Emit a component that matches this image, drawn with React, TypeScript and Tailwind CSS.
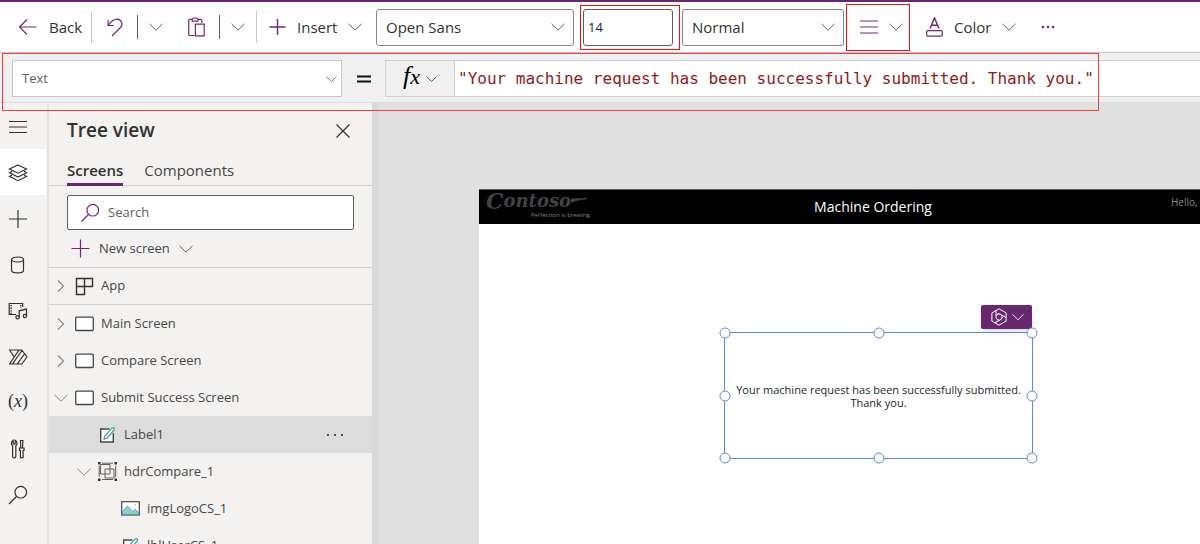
import type { ReactNode } from 'react';

const PURPLE = '#742774';

function Chevron({ className = 'w-3.5 text-[#605e5c]' }: { className?: string }) {
  return (
    <svg className={`h-2 shrink-0 ${className}`} viewBox="0 0 14 8" fill="none" stroke="currentColor">
      <path d="M.5 .8 7 7.2 13.5 .8" />
    </svg>
  );
}

function Svg({ w, h, children, color = '#323130' }: { w: number; h: number; children: ReactNode; color?: string }) {
  return (
    <svg width={w} height={h} viewBox={`0 0 ${w} ${h}`} fill="none" stroke={color} strokeWidth="1.2" className="shrink-0">
      {children}
    </svg>
  );
}

function Separator({ dark = false }: { dark?: boolean }) {
  return <div className={dark ? 'h-6 w-px shrink-0 bg-[#605e5c]' : 'h-8 w-px shrink-0 bg-[#c8c6c4]'} />;
}

function Dropdown({ label, value, className, chevron }: { label: string; value: string; className: string; chevron: string }) {
  return (
    <div className={`relative shrink-0 ${className}`}>
      <select aria-label={label} defaultValue={value} className="h-full w-full appearance-none bg-transparent px-[9px] outline-none">
        <option>{value}</option>
      </select>
      <span className={`pointer-events-none absolute inset-y-0 flex items-center ${chevron}`}>
        <Chevron className="w-full text-[#605e5c]" />
      </span>
    </div>
  );
}

function Toolbar() {
  return (
    <div className="relative flex h-[53px] items-center border-t-2 border-b border-t-[#68286f] border-b-[#c8c6c4] bg-white text-[15px] text-[#323130]">
      <button className="flex h-8 w-[91px] shrink-0 items-center gap-[11px] pl-[18px]">
        <Svg w={20} h={18} color={PURPLE}>
          <path d="M18.5 9H1.5M9 1.5 1.5 9 9 16.5" />
        </Svg>
        Back
      </button>
      <Separator />
      <button aria-label="Undo" className="flex w-[45px] shrink-0 justify-center">
        <Svg w={16} h={19} color={PURPLE}>
          <path d="M1 2v5.500h6M1.200 7.300C4.500 3 6.500 1.200 9.800 1.200c4.500 0 6.800 4.900 3.700 8.300L5 18" />
        </Svg>
      </button>
      <Separator dark />
      <button aria-label="Undo options" className="flex h-8 w-9 shrink-0 items-center justify-center"><Chevron /></button>
      <button aria-label="Paste" className="flex w-[45px] shrink-0 justify-center">
        <Svg w={17} h={20} color={PURPLE}>
          <path d="M6.500 18.500H1.800Q.7 18.500.7 17.400V3.400Q.7 2.300 1.800 2.300H4M10 2.300h2.700q1.100 0 1.100 1.100V6M4.200 4.200V2.200L5.500 1h3.200L10 2.200v2zM7.400 7.200h8.800v11.600H7.400z" />
        </Svg>
      </button>
      <Separator dark />
      <button aria-label="Paste options" className="flex h-8 w-9 shrink-0 items-center justify-center"><Chevron /></button>
      <Separator />
      <button className="flex h-8 w-[119px] shrink-0 items-center gap-[11px] pl-3">
        <Svg w={17} h={18} color={PURPLE}>
          <path d="M8.500 1v16M.5 9h16" strokeWidth="1.400" />
        </Svg>
        Insert
        <Chevron />
      </button>
      <Dropdown label="Font" value="Open Sans" className="h-[37px] w-[198px] rounded-[3px] border border-[#8a8886]" chevron="right-2 w-3.5" />
      <div className="relative ml-[9px] h-[37px] w-[90px] shrink-0">
        <input aria-label="Font size" defaultValue="14" className="h-full w-full rounded-[3px] border border-[#605e5c] px-1 text-[13px] text-[#1b1a3c] outline-none" />
        <div className="pointer-events-none absolute -inset-x-[3px] -inset-y-1 -right-[7px] border border-[#f40f0f]" />
      </div>
      <Dropdown label="Font weight" value="Normal" className="ml-[9px] h-[37px] w-[162px] rounded-[3px] border border-[#8a8886]" chevron="right-2 w-3.5" />
      <button aria-label="Text alignment" className="ml-0.5 flex h-[47px] w-16 shrink-0 items-center gap-[11px] border border-[#f40f0f] pl-[13px]">
        <Svg w={18} h={14} color={PURPLE}>
          <path d="M0 1h18M0 7h18M0 13h18" />
        </Svg>
        <Chevron />
      </button>
      <button className="flex h-8 w-[122px] shrink-0 items-center gap-[11px] pl-4">
        <Svg w={17} h={20} color={PURPLE}>
          <path d="M4 11.500 8.500 1 13 11.500M5.400 8.200h6.200" strokeWidth="1.500" />
          <rect x=".7" y="13.700" width="15.600" height="5.400" rx="1" />
        </Svg>
        Color
        <Chevron />
      </button>
      <button aria-label="More" className="flex h-8 w-8 shrink-0 items-center justify-center">
        <Svg w={14} h={4}>
          <g fill={PURPLE} stroke="none"><circle cx="2" cy="2" r="1.300" /><circle cx="7" cy="2" r="1.300" /><circle cx="12" cy="2" r="1.300" /></g>
        </Svg>
      </button>
    </div>
  );
}

function FormulaBar() {
  return (
    <div className="relative flex h-[50px] items-center border-b border-[#dcdcdc] bg-[#f0f0f0] pt-0.5 pl-3">
      <Dropdown label="Property" value="Text" className="h-[37px] w-[330px] border border-[#c8c6c4] bg-white text-[13px] text-[#605e5c]" chevron="right-1 w-[11px]" />
      <div className="flex w-[43px] shrink-0 justify-center">
        <Svg w={14} h={8} color="#111111"><path d="M0 1.500h14M0 6.500h14" strokeWidth="2" /></Svg>
      </div>
      <button aria-label="Formula options" className="flex h-[37px] w-[70px] shrink-0 items-center justify-center gap-1.5 border border-[#d2d0ce] text-black">
        <span className="flex items-baseline pb-1 font-['Liberation_Serif',serif] text-[26px] leading-7 italic">
          <span>f</span>
          <span className="text-[22px]">x</span>
        </span>
        <Chevron className="w-[11px] text-[#323130]" />
      </button>
      <input
        aria-label="Formula"
        defaultValue={'"Your machine request has been successfully submitted. Thank you."'}
        className="h-[37px] min-w-0 flex-1 border-y border-[#d2d0ce] bg-white px-[3px] font-['DejaVu_Sans_Mono',monospace] text-base text-[#8f1a1a] outline-none"
      />
      <div className="pointer-events-none absolute top-0 left-0.5 z-10 h-[58px] w-[1097px] border border-[#f53b3b]" />
    </div>
  );
}

const railItems: { name: string; icon: ReactNode }[] = [
  { name: 'Menu', icon: <Svg w={20} h={20}><path d="M1 4.500h18M1 10h18M1 15.500h18" /></Svg> },
  { name: 'Tree view', icon: <Svg w={20} h={20}><path d="m10 2 8.500 4L10 10.200 1.500 6zM4 8.200 1.500 9.800 10 14l8.500-4.200L16 8.200M4 12l-2.500 1.500L10 17.700l8.500-4.200L16 12" /></Svg> },
  { name: 'Insert', icon: <Svg w={20} h={20}><path d="M10 1v18M1 10h18" /></Svg> },
  { name: 'Data', icon: <Svg w={20} h={20}><ellipse cx="9.500" cy="4.500" rx="6" ry="2.500" /><path d="M3.500 4.500v11c0 3.200 12 3.200 12 0v-11" /></Svg> },
  {
    name: 'Media',
    icon: (
      <Svg w={20} h={20}>
        <path d="M8 13.500H1.200v-11h13.500V6" />
        <path d="M3.200 4v9M12.700 4v3" strokeDasharray="1.300 1.300" strokeWidth="1.500" />
        <path d="M11.200 16.200V9.800l7.300-1.700v6.800" />
        <circle cx="9.600" cy="16.300" r="1.700" /><circle cx="16.900" cy="15" r="1.700" />
      </Svg>
    ),
  },
  { name: 'Power Automate', icon: <Svg w={20} h={20}><path d="M1.500 3h12.300l5.200 7-5.200 7H1.500l4.700-7zM11 3.200 6.200 10M14 3.500 4.500 16.800M16.500 7 9.300 16.800" strokeLinejoin="round" /></Svg> },
  { name: 'Variables', icon: <span className="pb-1 font-['Liberation_Serif',serif] text-lg leading-5 text-[#323130]">(<i>x</i>)</span> },
  {
    name: 'Advanced tools',
    icon: (
      <Svg w={20} h={20}>
        <path d="M5.200 1.200v3.500l1 .6 1-.6V1.200c2.200 1.200 2.200 4.300.6 5.500v10.800c0 1.800-3.200 1.800-3.200 0V6.700C3 5.500 3 2.400 5.200 1.200zM12.500 1.500h2.400L14.500 9h-1.600zM11.500 9h4.500v2.500h-.9v7.200h-2.700v-7.200h-.9z" />
      </Svg>
    ),
  },
  { name: 'Search', icon: <Svg w={20} h={20}><circle cx="12.800" cy="7.200" r="5.800" /><path d="m8.500 11.500-7.500 7.500" /></Svg> },
];

function Rail() {
  return (
    <nav className="w-[49px] shrink-0 border-r-2 border-[#e3e1e0] bg-[#f3f2f1]">
      {railItems.map((item) => (
        <button
          key={item.name}
          aria-label={item.name}
          className={`flex h-[46px] w-[46px] items-center justify-center pt-0.5 pr-2.5 ${item.name === 'Tree view' ? 'bg-white' : ''}`}
        >
          {item.icon}
        </button>
      ))}
    </nav>
  );
}

function Expander({ open = false }: { open?: boolean }) {
  return (
    <span className="flex w-3.5 shrink-0 justify-center">
      {open ? (
        <Chevron className="w-3.5 text-[#8a8886]" />
      ) : (
        <Svg w={8} h={14} color="#8a8886"><path d="M1 1.500 6.500 7 1 12.500" /></Svg>
      )}
    </span>
  );
}

const ScreenIcon = () => <Svg w={19} h={16}><rect x=".7" y="1.200" width="17.600" height="13.300" rx="1" fill="#fff" stroke="#484644" strokeWidth="1.300" /></Svg>;

const LabelIcon = () => (
  <Svg w={17} h={18} color="#484644">
    <path d="M10.500 3H1.700v13h12.600V7" strokeWidth="1.400" fill="#fff" />
    <path d="M5 13.200 5.800 10 13 2.200q1.300-1 2.100-.1.800.9-.1 2.100L8 12.200z" fill="#fff" stroke="#3f9a9a" />
  </Svg>
);

const GroupIcon = () => (
  <Svg w={19} h={19} color="#605e5c">
    <path d="M2.500 2.500h9.500v9.500H2.500zM7 7h9v9H7zM4 17.500h11M1.200 4v11M4 1.200h11M17.700 4v11" strokeWidth="1" />
    <path d="M0 0h2.500v2.500H0zM16.500 0H19v2.500h-2.500zM0 16.500h2.500V19H0zM16.500 16.500H19V19h-2.500z" fill="#323130" stroke="none" />
  </Svg>
);

const ImageIcon = () => (
  <Svg w={19} h={15} color="#484644">
    <rect x=".7" y=".7" width="17.600" height="13.300" fill="#fff" />
    <path d="M1.500 10.500 6.500 5l5.200 5.500L14 8.200l3.700 3.600v1.600H1.500z" fill="#8fd0cf" stroke="#3f9a9a" strokeWidth=".8" />
    <circle cx="14.200" cy="4" r=".8" fill="#e8a33d" stroke="none" />
  </Svg>
);

function TreeRow({ indent, icon, label, expander, selected, divided }: {
  indent: string; icon: ReactNode; label: string; expander?: 'open' | 'closed'; selected?: boolean; divided?: boolean;
}) {
  return (
    <li className={`flex h-[37px] items-center ${indent} ${selected ? 'bg-[#dcdcdc]' : ''} ${divided ? 'border-b border-[#d2d0ce]' : ''}`}>
      {expander && <Expander open={expander === 'open'} />}
      <span className="flex w-[33px] shrink-0 items-center justify-center">{icon}</span>
      <span className="flex-1">{label}</span>
      {selected && (
        <button aria-label="More actions" className="mr-7 flex h-6 w-[18px] items-center justify-center">
          <Svg w={18} h={4}><g fill="#323130" stroke="none"><circle cx="2" cy="2" r="1.100" /><circle cx="9" cy="2" r="1.100" /><circle cx="16" cy="2" r="1.100" /></g></Svg>
        </button>
      )}
    </li>
  );
}

function TreePanel() {
  return (
    <aside className="w-[323px] shrink-0 bg-[#f3f2f1] text-[13px] text-[#484644]">
      <div className="flex h-[55px] items-center justify-between pr-[21px] pl-[18px]">
        <h2 className="text-[19px] font-semibold text-[#323130]">Tree view</h2>
        <button aria-label="Close">
          <Svg w={16} h={16}><path d="m1.500 1.500 13 13M14.500 1.500l-13 13" /></Svg>
        </button>
      </div>
      <div className="flex h-7 gap-[21px] border-b border-[#d2d0ce] pl-[18px] text-[15px] leading-6">
        <button className="h-7 border-b-[3px] border-[#68286f] pb-px font-semibold text-[#323130]">Screens</button>
        <button className="h-7 pb-1">Components</button>
      </div>
      <div className="px-[18px] pt-[9px]">
        <label className="flex h-[35px] items-center gap-2 rounded-xs border border-[#605e5c] bg-white px-3">
          <Svg w={20} h={20} color={PURPLE}><circle cx="12.800" cy="7.200" r="5.800" /><path d="m8.500 11.500-7 7" /></Svg>
          <input aria-label="Search" placeholder="Search" className="min-w-0 flex-1 outline-none placeholder:text-[#605e5c]" />
        </label>
      </div>
      <button className="flex h-[38px] w-full items-center gap-[9px] border-b border-[#d2d0ce] pl-[22px]">
        <Svg w={19} h={19} color={PURPLE}><path d="M9.500 .5v18M.5 9.500h18" /></Svg>
        New screen
        <Chevron />
      </button>
      <ul>
        <TreeRow
          indent="pl-[5px]" expander="closed" label="App" divided
          icon={<Svg w={19} h={19}><path d="M1.500 1.500h8v16h-8zM9.500 1.500h8v8h-16" strokeWidth="1.400" /></Svg>}
        />
        <TreeRow indent="pl-[5px]" expander="closed" icon={<ScreenIcon />} label="Main Screen" />
        <TreeRow indent="pl-[5px]" expander="closed" icon={<ScreenIcon />} label="Compare Screen" />
        <TreeRow indent="pl-[5px]" expander="open" icon={<ScreenIcon />} label="Submit Success Screen" />
        <TreeRow indent="pl-[42px]" icon={<LabelIcon />} label="Label1" selected />
        <TreeRow indent="pl-7" expander="open" icon={<GroupIcon />} label="hdrCompare_1" />
        <TreeRow indent="pl-[65px]" icon={<ImageIcon />} label="imgLogoCS_1" />
        <TreeRow indent="pl-[65px]" icon={<LabelIcon />} label="lblUserCS_1" />
      </ul>
    </aside>
  );
}

const handles = [
  'left-0 top-0', 'left-1/2 top-0', 'left-full top-0',
  'left-0 top-1/2', 'left-full top-1/2',
  'left-0 top-full', 'left-1/2 top-full', 'left-full top-full',
];

function Canvas() {
  return (
    <main className="min-w-0 flex-1 overflow-hidden border-l-[7px] border-[#d9d9d9] bg-[#e0e0e0] pt-[86px] pl-[100px]">
      <div className="relative h-full w-[788px] bg-white">
        <header className="grid h-[35px] grid-cols-[96px_1fr_96px] border-t border-[#605e5c] bg-black font-['Open_Sans',sans-serif]">
          <div className="pl-[7px] whitespace-nowrap text-[#424146]">
            <div className="flex h-[22px] w-[101px] items-center font-['DejaVu_Serif',serif] text-[18px] leading-[22px] font-bold italic">
              <span className="text-[22px]">C</span>
              <span>ontoso</span>
              <svg className="h-2 w-4 shrink-0" viewBox="0 0 16 8" fill="currentColor"><path d="M0 1.500 16 1v1.300Q6 3 0 6z" /></svg>
            </div>
            <p className="w-[101px] pl-[45px] text-[6px] leading-[6px] text-[#858585]">Perfection is brewing.</p>
          </div>
          <h1 className="self-center text-center text-sm text-white">Machine Ordering</h1>
          <p className="pt-1 text-[10px] leading-4 text-[#8a8886]">Hello,</p>
        </header>
        <div className="absolute top-[143px] left-[245px] flex h-[127px] w-[309px] items-center justify-center border border-[#5b8ae0]">
          <p className="text-center font-['Open_Sans',sans-serif] text-[11px] leading-[13px] text-[#201f1e]">
            Your machine request has been successfully submitted.<br />Thank you.
          </p>
          <button aria-label="Copilot" className="absolute right-0 bottom-full mb-1 flex h-6 w-[51px] items-center justify-center gap-1 rounded-xs bg-[#68286f] shadow-md">
            <Svg w={18} h={18} color="#ffffff">
              <g strokeWidth="1" strokeLinejoin="round">
                <path d="M9 .8 16.100 4.900v8.200L9 17.200 1.900 13.100V4.900z" />
                <path d="M6 2.600V9c0 1.700 1.300 3 3 3" />
                <path d="M6 2.600V9c0 1.700 1.300 3 3 3" transform="rotate(120 9 9)" />
                <path d="M6 2.600V9c0 1.700 1.300 3 3 3" transform="rotate(240 9 9)" />
              </g>
            </Svg>
            <Chevron className="w-3 text-white" />
          </button>
          {handles.map((place) => (
            <span key={place} className={`absolute size-[11px] -translate-1/2 rounded-full border border-[#5b8ae0] bg-white ${place}`} />
          ))}
        </div>
      </div>
    </main>
  );
}

export default function App() {
  return (
    <div className="flex h-screen flex-col overflow-hidden bg-[#f3f2f1] font-['Open_Sans',sans-serif]">
      <Toolbar />
      <FormulaBar />
      <div className="flex min-h-0 flex-1">
        <Rail />
        <TreePanel />
        <Canvas />
      </div>
    </div>
  );
}
